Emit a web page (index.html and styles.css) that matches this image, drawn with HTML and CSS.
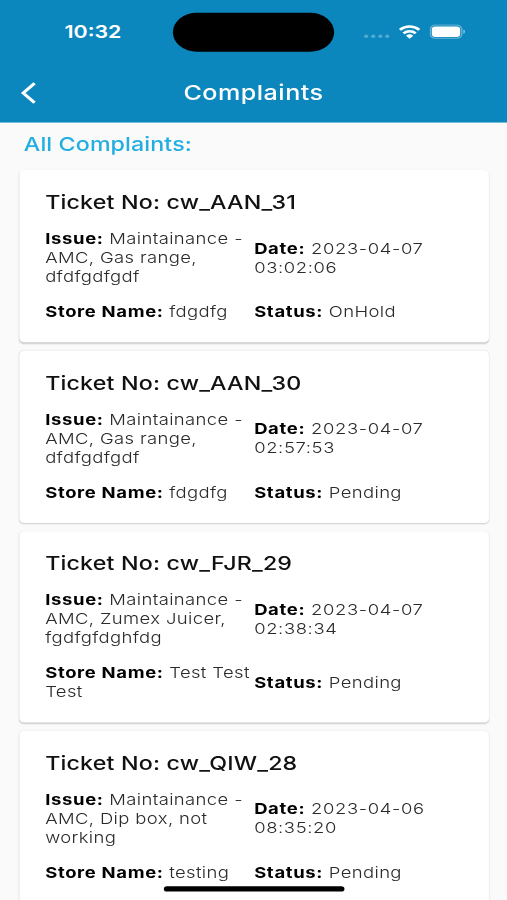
FILE: index.html
```html
<!DOCTYPE html>
<html lang="en">
<head>
    <meta charset="UTF-8">
    <meta name="viewport" content="width=device-width, initial-scale=1.0">
    <title>Complaints</title>
    <link rel="stylesheet" href="styles.css">
</head>
<body>
    <div class="screen">
        <header class="header">
            <div class="status-bar">
                <span class="time">10:32</span>
                <div class="island"></div>
                <div class="status-icons">
                    <svg class="dots" width="20" height="14" viewBox="0 0 20 14">
                        <circle cx="1.8" cy="11.3" r="1.6"/>
                        <circle cx="7.3" cy="11.3" r="1.6"/>
                        <circle cx="12.8" cy="11.3" r="1.6"/>
                        <circle cx="18.2" cy="11.3" r="1.6"/>
                    </svg>
                    <svg class="wifi" width="17" height="14" viewBox="0 0 17 14">
                        <path d="M1 5.2a10.8 10.8 0 0 1 15 0M3.8 8.5a6.7 6.7 0 0 1 9.4 0" fill="none" stroke="#fff" stroke-width="2.3"/>
                        <path d="M8.5 13.6L5.7 10.8a4 4 0 0 1 5.6 0z" fill="#fff"/>
                    </svg>
                    <svg class="battery" width="28" height="14" viewBox="0 0 28 14">
                        <rect x=".5" y=".7" width="24.5" height="12.6" rx="4" fill="none" stroke="#fff" stroke-opacity=".4"/>
                        <rect x="1.7" y="2" width="22" height="10" rx="2.8" fill="#fff"/>
                        <path d="M26.2 5v4a2.2 2.2 0 0 0 0-4z" fill="#fff" fill-opacity=".5"/>
                    </svg>
                </div>
            </div>
            <div class="nav-bar">
                <svg class="back" width="14" height="22" viewBox="0 0 14 22">
                    <path d="M11.8 1.8L3 11l8.8 9.2" fill="none" stroke="#fff" stroke-width="2.6"/>
                </svg>
                <h1>Complaints</h1>
            </div>
        </header>

        <main class="content">
            <h2>All Complaints:</h2>

            <div class="card">
                <h3>Ticket No: cw_AAN_31</h3>
                <div class="card-row">
                    <p><b>Issue:</b> Maintainance -<br>AMC, Gas range,<br>dfdfgdfgdf</p>
                    <p class="date"><b>Date:</b> 2023-04-07<br>03:02:06</p>
                </div>
                <div class="card-row">
                    <p><b>Store Name:</b> fdgdfg</p>
                    <p><b>Status:</b> OnHold</p>
                </div>
            </div>

            <div class="card">
                <h3>Ticket No: cw_AAN_30</h3>
                <div class="card-row">
                    <p><b>Issue:</b> Maintainance -<br>AMC, Gas range,<br>dfdfgdfgdf</p>
                    <p class="date"><b>Date:</b> 2023-04-07<br>02:57:53</p>
                </div>
                <div class="card-row">
                    <p><b>Store Name:</b> fdgdfg</p>
                    <p><b>Status:</b> Pending</p>
                </div>
            </div>

            <div class="card">
                <h3>Ticket No: cw_FJR_29</h3>
                <div class="card-row">
                    <p><b>Issue:</b> Maintainance -<br>AMC, Zumex Juicer,<br>fgdfgfdghfdg</p>
                    <p class="date"><b>Date:</b> 2023-04-07<br>02:38:34</p>
                </div>
                <div class="card-row">
                    <p><b>Store Name:</b> Test Test<br>Test</p>
                    <p><b>Status:</b> Pending</p>
                </div>
            </div>

            <div class="card">
                <h3>Ticket No: cw_QIW_28</h3>
                <div class="card-row">
                    <p><b>Issue:</b> Maintainance -<br>AMC, Dip box, not<br>working</p>
                    <p class="date"><b>Date:</b> 2023-04-06<br>08:35:20</p>
                </div>
                <div class="card-row">
                    <p><b>Store Name:</b> testing</p>
                    <p><b>Status:</b> Pending</p>
                </div>
            </div>
        </main>

        <div class="home-indicator"></div>
    </div>
</body>
</html>
```
FILE: styles.css
```css
* {
    margin: 0;
    padding: 0;
    box-sizing: border-box;
}

body {
    width: 507px;
    height: 900px;
    overflow: hidden;
    background: #fafafa;
    font-family: Inter, Roboto, sans-serif;
}

/* 393x852 phone screen, stretched over the window */
.screen {
    position: relative;
    width: 393px;
    height: 852px;
    overflow: hidden;
    transform: scale(1.29008, 1.05634);
    transform-origin: 0 0;
}

.header {
    height: 115.5px;
    background: #0b87bd;
    color: #fff;
}

.status-bar {
    display: grid;
    grid-template-columns: 134.4px 125px 1fr;
    align-items: center;
    height: 60.4px;
}

.time {
    padding-left: 50px;
    font-size: 16.6px;
    font-weight: 600;
    line-height: 20px;
}

.island {
    height: 37px;
    border-radius: 19px;
    background: #000;
}

.status-icons {
    display: flex;
    padding-left: 22.4px;
}

.dots {
    fill: #fff;
    fill-opacity: .3;
}

.wifi {
    margin-left: 7px;
}

.battery {
    margin-left: 7px;
}

.nav-bar {
    display: grid;
    grid-template-columns: 50px 1fr 50px;
    align-items: center;
    height: 55.1px;
}

.back {
    margin-left: 15.2px;
}

h1 {
    text-align: center;
    font-size: 19.5px;
    font-weight: 500;
    letter-spacing: .35px;
}

.content {
    padding: 10.4px 14px 0 14.7px;
}

h2 {
    height: 35.2px;
    padding-left: 3.8px;
    color: #22aee0;
    font-size: 18px;
    font-weight: 500;
    letter-spacing: .08px;
    line-height: 22px;
}

.card {
    margin-bottom: 8px;
    padding: 19.8px 20.3px 20px;
    border-radius: 4px;
    background: #fff;
    box-shadow: 0 1px 1.5px rgba(0, 0, 0, 0.18), 0 0 2px rgba(0, 0, 0, 0.03);
}

h3 {
    margin-bottom: 14.2px;
    color: #111;
    font-size: 18px;
    font-weight: 500;
    letter-spacing: .14px;
    line-height: 22px;
}

.card-row {
    display: grid;
    grid-template-columns: 162px 162px;
    align-items: center;
    color: #2a2a2a;
    font-size: 14.3px;
    font-weight: 300;
    letter-spacing: .3px;
    line-height: 18px;
    white-space: nowrap;
}

.card-row + .card-row {
    margin-top: 15px;
}

.card-row b {
    color: #000;
    font-weight: 700;
    letter-spacing: .52px;
}

.card-row .date {
    letter-spacing: .48px;
}

.home-indicator {
    position: absolute;
    left: 127px;
    top: 839px;
    width: 140px;
    height: 5px;
    border-radius: 3px;
    background: #000;
}
```
